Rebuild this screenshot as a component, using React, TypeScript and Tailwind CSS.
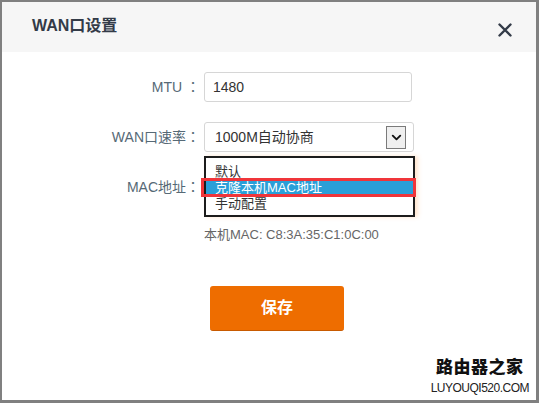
import { ChevronDown } from 'lucide-react';

const font = 'font-["Liberation_Sans","Noto_Sans_CJK_SC",sans-serif]';
const colon = 'font-["Noto_Sans_CJK_JP",sans-serif]';

const options = ['默认', '克隆本机MAC地址', '手动配置'];

const Label = ({ text }: { text: string }) => (
  <label className="w-[198px] text-right text-[#566976] text-[14px]">
    {text}
    <span className={colon}>：</span>
  </label>
);

const App = () => {
  return (
    <div className={`${font} relative w-[539px] h-[403px] bg-white border-l-2 border-t-2 border-r-[3px] border-b-[3px] border-[#808080] flex flex-col`}>
      {/* header */}
      <div className="h-[50px] bg-[#f6f6f6] flex items-center justify-between pl-[30px] pr-[24px] shrink-0">
        <span className="text-[16px] font-bold text-[#333b48] -mt-[3px]">WAN口设置</span>
        <svg width="14" height="14" viewBox="0 0 14 14" className="mt-[5px]">
          <path d="M1.5 1.5 L12.5 12.5 M12.5 1.5 L1.5 12.5" stroke="#333b48" strokeWidth="2.4" strokeLinecap="round" />
        </svg>
      </div>

      {/* form */}
      <div className="flex flex-col text-[14px]">
        <div className="flex items-center mt-[20px] h-[30px]">
          <Label text="MTU " />
          <div className="ml-[4px] w-[208px] h-[30px] border border-[#d6d6d6] rounded-[3px] flex items-center pl-[8px] text-[#333] text-[14px]">
            1480
          </div>
        </div>

        <div className="flex items-center mt-[20px] h-[30px]">
          <Label text="WAN口速率" />
          <div className="relative ml-[4px] w-[210px] h-[30px] border border-[#d6d6d6] rounded-[3px] flex items-center justify-between pl-[10px] pr-[7px] text-[#333] text-[14px]">
            <span>1000M自动协商</span>
            <div className="w-[20px] h-[23px] bg-[#efefef] border border-[#7a7a7a] flex items-center justify-center">
              <ChevronDown size={15} strokeWidth={3} color="#111" />
            </div>

            {/* opened list */}
            <div className="absolute left-[-1px] top-[33px] w-[211px] h-[61px] border-2 border-[#1c1c1c] bg-white pt-[6px] text-[13px] text-[#333] shadow-[3px_0_4px_rgba(255,150,60,0.25)]">
              {options.map((o, i) => (
                <div
                  key={o}
                  className={`h-[16px] leading-[16px] pl-[9px] ${i === 1 ? 'bg-[#2a9fd8] text-white' : ''}`}
                >
                  {o}
                </div>
              ))}
              <div className="absolute left-[-5px] top-[20px] w-[215px] h-[19px] border-[3px] border-[#f0353a]" />
            </div>
          </div>
        </div>

        <div className="flex items-center mt-[20px] h-[30px]">
          <Label text="MAC地址" />
        </div>

        <div className="ml-[202px] mt-[24px] text-[13px] leading-[18px] text-[#666]">
          本机MAC: C8:3A:35:C1:0C:00
        </div>

        <button className="ml-[208px] mt-[42px] w-[134px] h-[45px] rounded-[3px] bg-[#ee6d00] border-b border-[#c85a00] text-white text-[16px] font-bold">
          保存
        </button>
      </div>

      {/* watermark */}
      <div className="absolute right-[7px] bottom-[6px] flex flex-col items-center leading-none">
        <span className="text-[17px] font-black text-[#111] tracking-[0.5px]">路由器之家</span>
        <span className="mt-[6px] text-[12px] text-[#222] tracking-[-0.5px]">LUYOUQI520.COM</span>
      </div>
    </div>
  );
};

export default App;
